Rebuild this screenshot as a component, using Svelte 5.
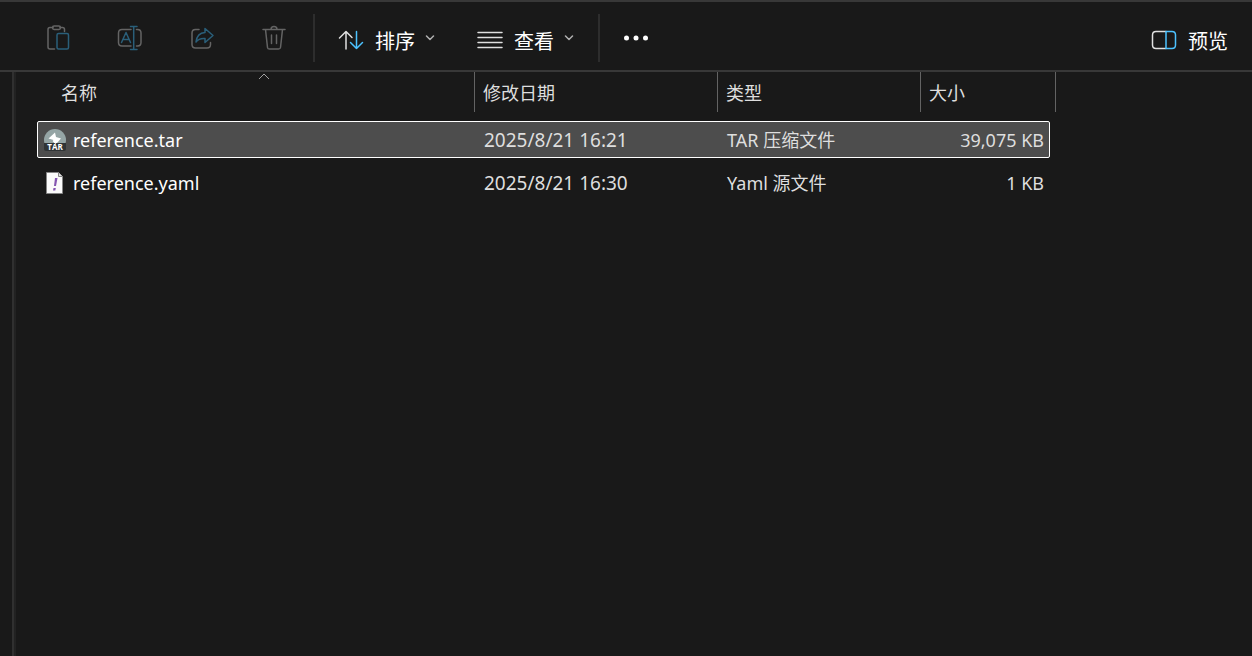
<script lang="ts">
	type FileRow = {
		name: string;
		modified: string;
		type: string;
		size: string;
		icon: 'tar' | 'yaml';
	};

	const columns = ['名称', '修改日期', '类型', '大小'];

	const files: FileRow[] = [
		{
			name: 'reference.tar',
			modified: '2025/8/21 16:21',
			type: 'TAR 压缩文件',
			size: '39,075 KB',
			icon: 'tar'
		},
		{
			name: 'reference.yaml',
			modified: '2025/8/21 16:30',
			type: 'Yaml 源文件',
			size: '1 KB',
			icon: 'yaml'
		}
	];

	let selected = $state(0);
</script>

{#snippet chevron()}
	<svg class="chevron" width="10" height="6" viewBox="0 0 10 6">
		<path d="M1.500 1l3.500 3.500L8.500 1" />
	</svg>
{/snippet}

<div class="explorer">
	<!-- Command bar -->
	<header class="toolbar">
		<button class="icon-btn" aria-label="粘贴" disabled>
			<svg width="26" height="26" viewBox="0 0 26 26">
				<path d="M8 2.500H5Q3 2.500 3 4.500V22Q3 24 5 24H9.500M15 2.500H17.500Q19.500 2.500 19.500 4.500V6.500" />
				<rect x="7.500" y="1" width="8" height="3.500" rx="1.700" />
				<rect class="accent" x="12" y="8.500" width="11.500" height="15.500" rx="1.500" />
			</svg>
		</button>
		<button class="icon-btn" aria-label="重命名" disabled>
			<svg width="26" height="26" viewBox="0 0 26 26">
				<path d="M14 4.500H5Q1.500 4.500 1.500 8V17.500Q1.500 21 5 21H14M19.500 4.500H20.500Q24 4.500 24 8V17.500Q24 21 20.500 21H19.500" />
				<path class="accent" d="M4.500 17.500L9 7.500l4.500 10M6 14.500h6M13.500 1.500h6.500M13.500 24.500h6.500M16.700 1.500v23" />
			</svg>
		</button>
		<button class="icon-btn" aria-label="共享" disabled>
			<svg width="26" height="26" viewBox="0 0 26 26">
				<path d="M10 4.500H6.500Q3 4.500 3 8V19.500Q3 23 6.500 23H18Q21.500 23 21.500 19.500V17.500" />
				<path class="accent" d="M16 3.500l8 7-8 7v-4q-6-.5-9 3.500 1-9 9-9.500z" />
			</svg>
		</button>
		<button class="icon-btn" aria-label="删除" disabled>
			<svg width="26" height="26" viewBox="0 0 26 26">
				<path d="M2 4.500h22M4.500 4.500l2 18Q6.700 24 8.500 24h9q1.800 0 2-1.500l2-18M10 4.500Q10 1.500 13 1.500T16 4.500M10.500 10v8.500M15.500 10v8.500" />
			</svg>
		</button>

		<div class="divider"></div>

		<button class="text-btn">
			<svg width="26" height="26" viewBox="0 0 26 26">
				<path d="M8 22V5M1.500 11L8 4.500l6 6" />
				<path class="accent" d="M18.500 4.500v17M12.500 15.500l6 6 6-6" />
			</svg>
			<span>排序</span>
			{@render chevron()}
		</button>
		<button class="text-btn">
			<svg width="26" height="26" viewBox="0 0 26 26">
				<path d="M1 5.500h24M1 10.500h24M1 15.500h24M1 20.500h24" />
			</svg>
			<span>查看</span>
			{@render chevron()}
		</button>

		<div class="divider"></div>

		<button class="more-btn" aria-label="查看更多">
			<svg width="26" height="6" viewBox="0 0 26 6">
				<circle cx="3.500" cy="3" r="2.500" />
				<circle cx="13" cy="3" r="2.500" />
				<circle cx="22.500" cy="3" r="2.500" />
			</svg>
		</button>

		<button class="text-btn preview">
			<svg width="26" height="26" viewBox="0 0 26 26">
				<path d="M15 4.500H5Q1.500 4.500 1.500 8V18Q1.500 21.500 5 21.500H15" />
				<path class="accent" d="M15 4.500H21Q24.500 4.500 24.500 8V18Q24.500 21.500 21 21.500H15z" />
			</svg>
			<span>预览</span>
		</button>
	</header>

	<main class="content">
		<table>
			<thead>
				<tr>
					{#each columns as column, i}
						<th scope="col" aria-sort={i === 0 ? 'ascending' : undefined}>
							{column}
							{#if i === 0}
								<svg class="sort-mark" width="12" height="7" viewBox="0 0 12 7">
									<path d="M1 6l5-5 5 5" />
								</svg>
							{/if}
						</th>
					{/each}
				</tr>
			</thead>
			<tbody>
				{#each files as file, i}
					<tr class:selected={i === selected} onclick={() => (selected = i)}>
						<td class="name">
							{#if file.icon === 'tar'}
								<svg width="24" height="24" viewBox="0 0 24 24">
									<circle cx="12" cy="12" r="11" fill="#95a5a5" />
									<path d="M12 4.500l-6.500 6 5 1.500-1 1 3.500 3 5-5.500-5-1.500z" fill="#fff" />
									<path d="M1 15h22v6q0 2-2 2H3q-2 0-2-2z" fill="#303436" />
									<path d="M10 13.500l2.500 2.500 3-3z" fill="#fff" />
									<text x="12" y="22" text-anchor="middle">TAR</text>
								</svg>
							{:else}
								<svg width="24" height="24" viewBox="0 0 24 24">
									<path d="M3.500 1.500h12l4 4v17h-16z" fill="#fafafa" stroke="#858585" />
									<path d="M15.500 1.500v4h4" fill="#ddd" stroke="#858585" />
									<path d="M12 7h2.500l-1.500 8h-2zM10.500 17h2.300l-.5 2.500H10z" fill="#8455b0" />
								</svg>
							{/if}
							<span>{file.name}</span>
						</td>
						<td class="modified">{file.modified}</td>
						<td>{file.type}</td>
						<td class="size">{file.size}</td>
					</tr>
				{/each}
			</tbody>
		</table>
	</main>
</div>

<style>
	:global(body) {
		background: #191919;
	}

	.explorer {
		display: flex;
		flex-direction: column;
		min-height: 100vh;
		box-sizing: border-box;
		border-top: 2px solid #383838;
		color: #fff;
		font-family: 'Noto Sans', 'Noto Sans CJK SC', sans-serif;
	}

	.toolbar {
		display: flex;
		align-items: center;
		height: 64px;
		padding: 4px 24px 0 22px;
		border-bottom: 2px solid #383838;
	}

	button {
		display: flex;
		align-items: center;
		justify-content: center;
		padding: 0;
		border: 0;
		background: none;
		color: inherit;
		font: inherit;
		font-size: 20px;
		line-height: 28px;
	}

	button svg {
		fill: none;
		stroke: #e0e0e0;
		stroke-width: 1.5;
		stroke-linecap: round;
		stroke-linejoin: round;
	}

	.icon-btn {
		width: 72px;
		height: 48px;
	}

	.icon-btn svg {
		stroke: #646464;
	}

	.accent {
		stroke: #4cc2ff;
	}

	.icon-btn .accent {
		stroke: #2a5f7a;
	}

	.divider {
		width: 2px;
		height: 48px;
		margin: 0 23px 0 3px;
		background: #2d2d2d;
	}

	.text-btn {
		gap: 11px;
		height: 48px;
		padding-top: 4px;
		margin-right: 42px;
	}

	.text-btn span {
		padding-top: 4px;
	}

	.text-btn .chevron {
		margin: 0 0 4px -1px;
		stroke: #b0b0b0;
	}

	.text-btn + .divider {
		margin-left: -18px;
	}

	.more-btn {
		height: 48px;
	}

	.more-btn svg {
		fill: #fff;
		stroke: none;
	}

	.preview {
		margin: 0 0 0 auto;
	}

	.content {
		flex: 1;
		margin-left: 12px;
		padding-left: 21px;
		border-left: 2px solid #303030;
		box-shadow: inset 2px 0 #222;
	}

	table {
		display: block;
		padding-left: 2px;
		font-size: 18px;
		line-height: 26px;
	}

	thead,
	tbody {
		display: block;
	}

	tr {
		display: grid;
		grid-template-columns: 438px 243px 203px 127px;
		width: max-content;
	}

	thead tr {
		grid-template-columns: 422px 243px 203px 135px;
		padding-left: 16px;
		margin-bottom: 9px;
	}

	th {
		position: relative;
		height: 40px;
		box-sizing: border-box;
		padding: 8px;
		border-right: 1px solid #636363;
		color: #dedede;
		font-weight: 400;
		text-align: left;
	}

	.sort-mark {
		position: absolute;
		top: 1px;
		left: calc(50% - 6px);
		fill: none;
		stroke: #a0a0a0;
	}

	tbody tr {
		height: 37px;
		margin-bottom: 6px;
		box-sizing: border-box;
		border: 1px solid transparent;
		border-radius: 2px;
	}

	tbody tr.selected {
		border-color: #fff;
		background: #4d4d4d;
	}

	td {
		padding: 5px 8px;
		color: #dedede;
	}

	.name {
		display: flex;
		align-items: center;
		gap: 6px;
		padding-left: 5px;
		color: #fff;
	}

	.name text {
		fill: #fff;
		font: 700 8px 'Open Sans', sans-serif;
	}

	.modified {
		font-size: 19px;
	}

	.size {
		padding-right: 5px;
		text-align: right;
	}
</style>
